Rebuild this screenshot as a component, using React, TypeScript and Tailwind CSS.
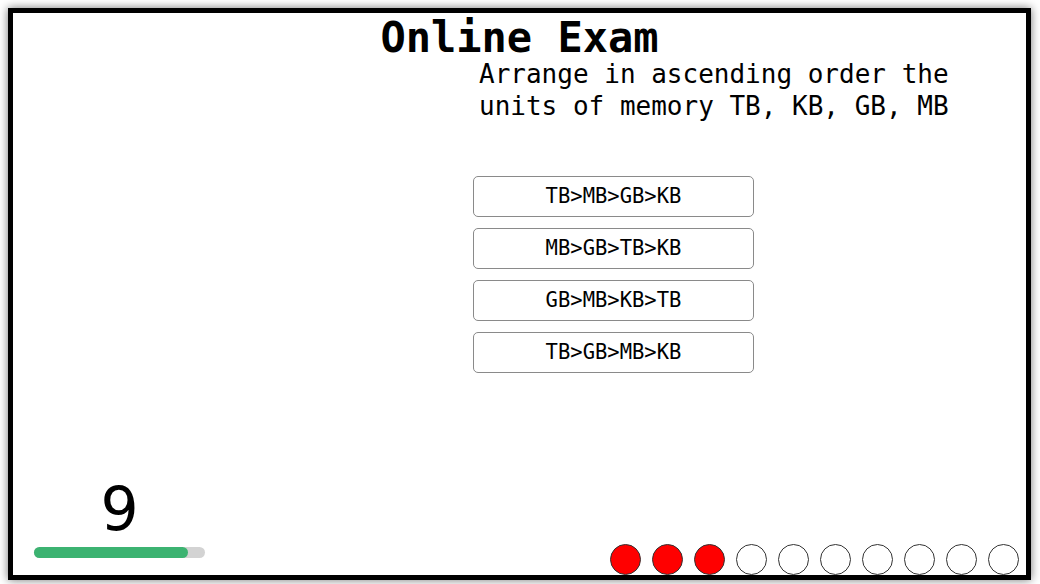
import React from "react";

const options = ["TB>MB>GB>KB", "MB>GB>TB>KB", "GB>MB>KB>TB", "TB>GB>MB>KB"];

// first three questions answered
const progress = [true, true, true, false, false, false, false, false, false, false];

export default function App() {
  const [selected, setSelected] = React.useState<number | null>(null);

  return (
    <div className="w-[1040px] h-[584px] bg-white p-2">
      <div className="flex h-[572px] w-[1023px] flex-col border-[5px] border-black bg-white shadow-[0_0_9px_rgba(0,0,0,0.55)]">
        <h1 className="mt-px text-center font-['DejaVu_Sans_Mono',monospace] text-[42px] font-bold leading-[48px] text-black">
          Online Exam
        </h1>
        <p className="-mt-1 ml-[466px] w-[500px] font-['DejaVu_Sans_Mono',monospace] text-[26px] leading-[32px] text-black">
          Arrange in ascending order the units of memory TB, KB, GB, MB
        </p>

        <div className="mt-[54px] ml-[460px] flex w-[281px] flex-col gap-[11px]">
          {options.map((option, i) => (
            <button
              key={option}
              type="button"
              onClick={() => setSelected(i)}
              className={`h-[41px] rounded-[5px] border border-[#8a8a8a] font-['DejaVu_Sans_Mono',monospace] text-[20.5px] text-black ${
                selected === i ? "bg-gray-100" : "bg-white"
              }`}
            >
              {option}
            </button>
          ))}
        </div>

        <div className="mt-auto flex items-end justify-between">
          <div className="mb-[17px] ml-[21px] flex w-[171px] flex-col items-center">
            <span className="font-['DejaVu_Sans',sans-serif] text-[60px] leading-[60px] text-black">
              9
            </span>
            <div className="mt-2 h-[11px] w-full rounded-full bg-[#d3d3d3]">
              <div className="h-full w-[90%] rounded-full bg-[#3cb371]" />
            </div>
          </div>

          <div className="mr-[7px] flex gap-[11px]">
            {progress.map((done, i) => (
              <div
                key={i}
                className={`h-[31px] w-[31px] rounded-full border border-[#333] ${
                  done ? "bg-[#ff0000]" : "bg-white"
                }`}
              />
            ))}
          </div>
        </div>
      </div>
    </div>
  );
}
